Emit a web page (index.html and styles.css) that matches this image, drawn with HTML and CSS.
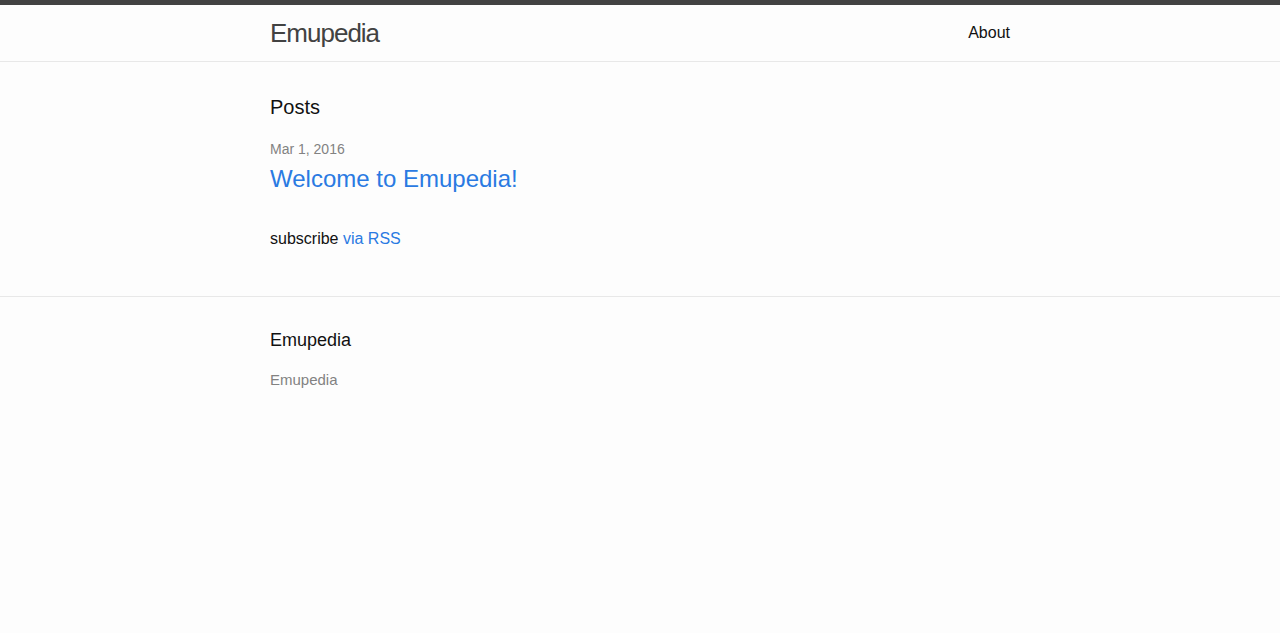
FILE: index.html
```html
<!DOCTYPE html>
<html lang="en">
<head>
<meta charset="utf-8">
<title>Emupedia</title>
<link rel="stylesheet" href="styles.css">
</head>
<body>
<header class="site-header">
  <div class="wrapper header-inner">
    <a class="site-title" href="#">Emupedia</a>
    <nav class="site-nav">
      <a class="page-link" href="#">About</a>
    </nav>
  </div>
</header>
<main class="page-content">
  <div class="wrapper">
    <h1 class="page-heading">Posts</h1>
    <ul class="post-list">
      <li>
        <span class="post-meta">Mar 1, 2016</span>
        <h2><a class="post-link" href="#">Welcome to Emupedia!</a></h2>
      </li>
    </ul>
    <p class="rss-subscribe">subscribe <a href="#">via RSS</a></p>
  </div>
</main>
<footer class="site-footer">
  <div class="wrapper">
    <h2 class="footer-heading">Emupedia</h2>
    <div class="footer-col-wrapper">
      <ul class="contact-list">
        <li>Emupedia</li>
      </ul>
    </div>
  </div>
</footer>
</body>
</html>
```
FILE: styles.css
```css
html, body {
  margin: 0;
  padding: 0;
}
body {
  font-family: "Liberation Sans", Arial, sans-serif;
  font-size: 16px;
  line-height: 1.5;
  color: #111111;
  background: #fdfdfd;
}
h1, h2, p, ul {
  margin: 0 0 15px 0;
  padding: 0;
  font-weight: 400;
}
a {
  color: #2a7ae2;
  text-decoration: none;
}
.wrapper {
  max-width: 740px;
  margin: 0 auto;
  padding: 0 30px;
}
.site-header {
  border-top: 5px solid #424242;
  border-bottom: 1px solid #e8e8e8;
  min-height: 56px;
}
.header-inner {
  display: flex;
  justify-content: space-between;
  align-items: flex-start;
}
.site-title {
  font-size: 26px;
  line-height: 56px;
  letter-spacing: -1px;
  color: #424242;
}
.site-nav {
  line-height: 54px;
  padding-top: 1px;
}
.page-link {
  color: #111111;
  line-height: 1.5;
}
.page-content {
  padding: 30px 0;
}
.page-heading {
  font-size: 20px;
  line-height: 30px;
}
.post-list {
  list-style: none;
  margin-left: 0;
}
.post-list > li {
  margin-bottom: 30px;
}
.post-meta {
  font-size: 14px;
  color: #828282;
}
.post-list h2 {
  font-size: 24px;
  line-height: 36px;
}
.post-link {
  display: block;
  font-size: 24px;
}
.site-footer {
  border-top: 1px solid #e8e8e8;
  padding: 30px 0;
}
.footer-heading {
  font-size: 18px;
  line-height: 27px;
  margin-bottom: 15px;
}
.footer-col-wrapper {
  font-size: 15px;
  color: #828282;
}
.contact-list {
  list-style: none;
  margin: 0;
}
```
